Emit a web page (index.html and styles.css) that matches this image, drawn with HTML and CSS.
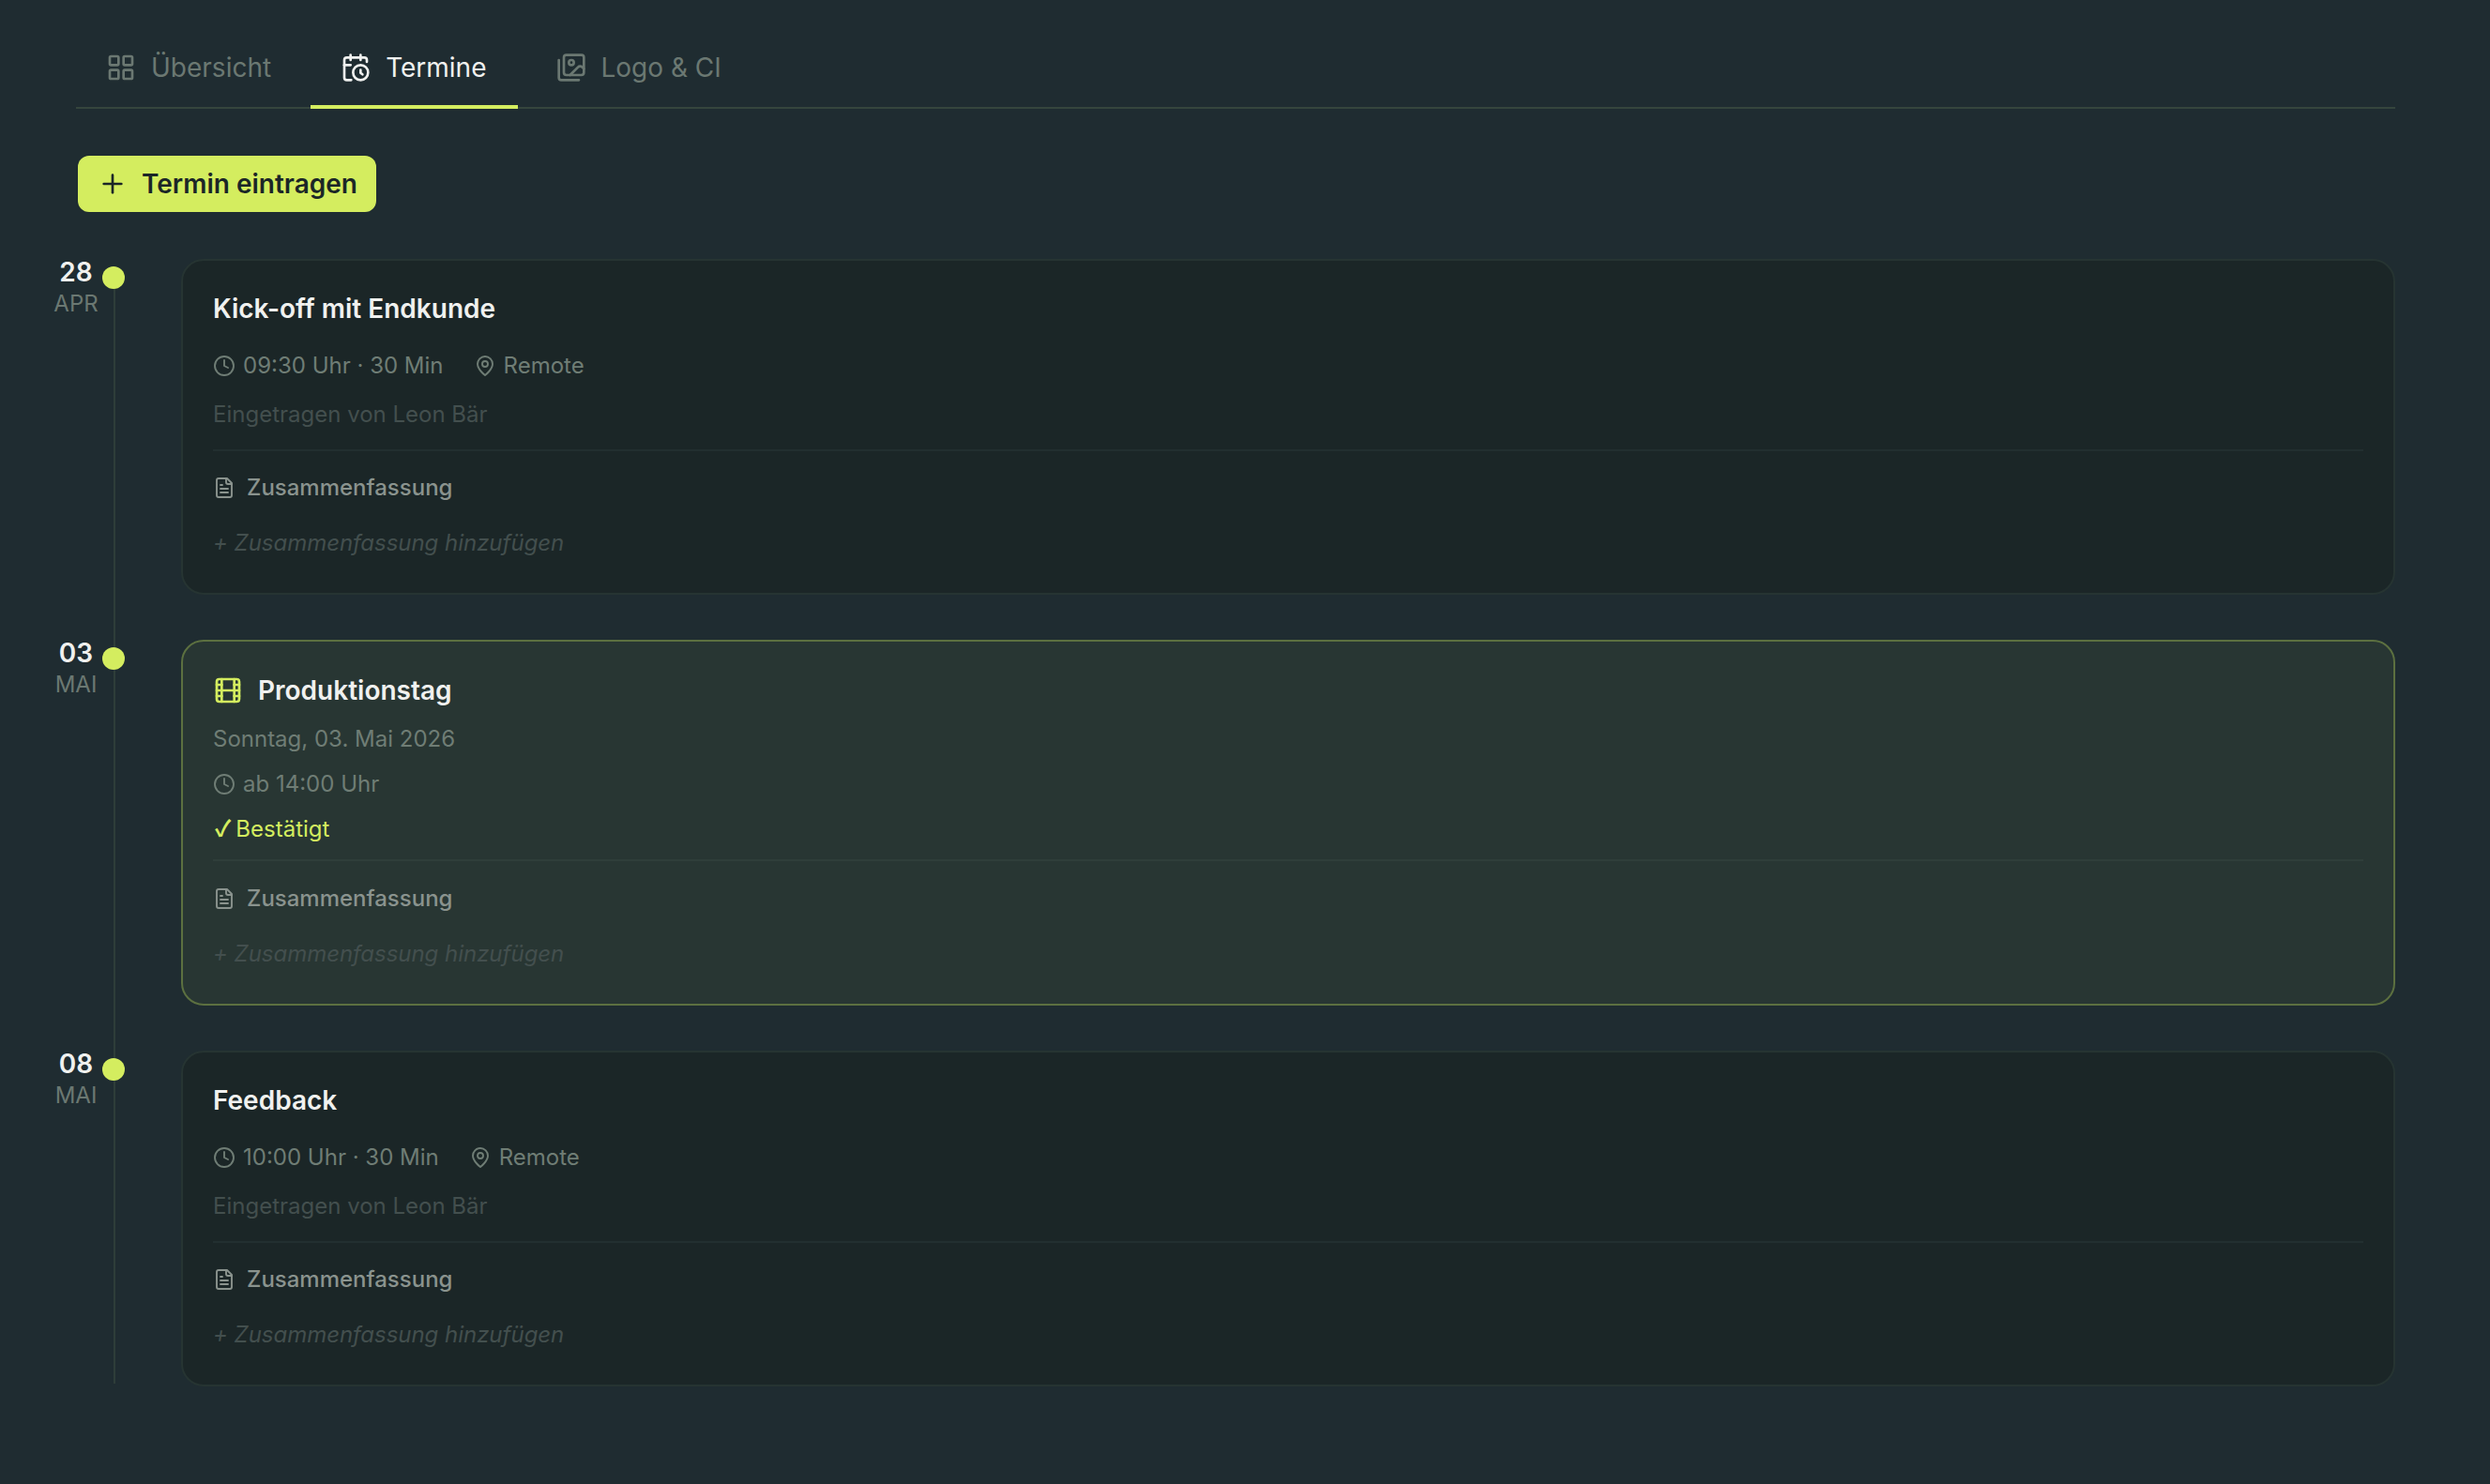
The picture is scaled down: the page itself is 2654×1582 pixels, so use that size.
FILE: index.html
```html
<!DOCTYPE html>
<html lang="de">
<head>
    <meta charset="UTF-8">
    <meta name="viewport" content="width=device-width, initial-scale=1.0">
    <title>Termine</title>
    <link rel="stylesheet" href="styles.css">
</head>
<body>
    <svg class="sprite" aria-hidden="true">
        <symbol id="i-grid" viewBox="0 0 24 24"><rect x="3" y="3" width="7" height="7" rx="1"/><rect x="14" y="3" width="7" height="7" rx="1"/><rect x="14" y="14" width="7" height="7" rx="1"/><rect x="3" y="14" width="7" height="7" rx="1"/></symbol>
        <symbol id="i-calendar" viewBox="0 0 24 24"><path d="M21 7.5V6a2 2 0 0 0-2-2H5a2 2 0 0 0-2 2v14a2 2 0 0 0 2 2h3.5"/><path d="M16 2v4"/><path d="M8 2v4"/><path d="M3 10h5"/><path d="M17.5 17.5 16 16.3V14"/><circle cx="16" cy="16" r="6"/></symbol>
        <symbol id="i-images" viewBox="0 0 24 24"><path d="M18 22H4a2 2 0 0 1-2-2V6"/><path d="m22 13-1.296-1.296a2.41 2.41 0 0 0-3.408 0L11 18"/><circle cx="12" cy="8" r="2"/><rect x="6" y="2" width="16" height="16" rx="2"/></symbol>
        <symbol id="i-plus" viewBox="0 0 24 24"><path d="M5 12h14"/><path d="M12 5v14"/></symbol>
        <symbol id="i-clock" viewBox="0 0 24 24"><circle cx="12" cy="12" r="10"/><polyline points="12 6 12 12 16 14"/></symbol>
        <symbol id="i-pin" viewBox="0 0 24 24"><path d="M20 10c0 6-8 12-8 12s-8-6-8-12a8 8 0 0 1 16 0Z"/><circle cx="12" cy="10" r="3"/></symbol>
        <symbol id="i-file" viewBox="0 0 24 24"><path d="M15 2H6a2 2 0 0 0-2 2v16a2 2 0 0 0 2 2h12a2 2 0 0 0 2-2V7Z"/><path d="M14 2v4a2 2 0 0 0 2 2h4"/><path d="M10 9H8"/><path d="M16 13H8"/><path d="M16 17H8"/></symbol>
        <symbol id="i-film" viewBox="0 0 24 24"><rect x="3" y="3" width="18" height="18" rx="2"/><path d="M7 3v18"/><path d="M3 7.5h4"/><path d="M3 12h18"/><path d="M3 16.5h4"/><path d="M17 3v18"/><path d="M17 7.5h4"/><path d="M17 16.5h4"/></symbol>
    </svg>

    <nav class="tabs">
        <a class="tab"><svg class="icon-lg"><use href="#i-grid"/></svg>Übersicht</a>
        <a class="tab active"><svg class="icon-lg"><use href="#i-calendar"/></svg>Termine</a>
        <a class="tab"><svg class="icon-lg"><use href="#i-images"/></svg>Logo &amp; CI</a>
    </nav>

    <button class="add-btn"><svg class="icon-lg"><use href="#i-plus"/></svg>Termin eintragen</button>

    <div class="timeline">
        <!-- Kick-off -->
        <div class="entry">
            <div class="date"><strong>28</strong><span>APR</span></div>
            <div class="dot"></div>
            <div class="card">
                <h2 class="title">Kick-off mit Endkunde</h2>
                <div class="meta">
                    <span class="meta-item"><svg class="icon"><use href="#i-clock"/></svg>09:30 Uhr · 30 Min</span>
                    <span class="meta-item"><svg class="icon"><use href="#i-pin"/></svg>Remote</span>
                </div>
                <div class="author">Eingetragen von Leon Bär</div>
                <div class="summary">
                    <div class="summary-head"><svg class="icon"><use href="#i-file"/></svg>Zusammenfassung</div>
                    <div class="summary-add">+ Zusammenfassung hinzufügen</div>
                </div>
            </div>
        </div>

        <!-- Produktionstag -->
        <div class="entry">
            <div class="date"><strong>03</strong><span>MAI</span></div>
            <div class="dot"></div>
            <div class="card production">
                <h2 class="title"><svg class="icon-lg"><use href="#i-film"/></svg>Produktionstag</h2>
                <div class="line">Sonntag, 03. Mai 2026</div>
                <div class="line meta-item"><svg class="icon"><use href="#i-clock"/></svg>ab 14:00 Uhr</div>
                <div class="line confirmed"><span class="check">✓</span>Bestätigt</div>
                <div class="summary">
                    <div class="summary-head"><svg class="icon"><use href="#i-file"/></svg>Zusammenfassung</div>
                    <div class="summary-add">+ Zusammenfassung hinzufügen</div>
                </div>
            </div>
        </div>

        <!-- Feedback -->
        <div class="entry">
            <div class="date"><strong>08</strong><span>MAI</span></div>
            <div class="dot"></div>
            <div class="card">
                <h2 class="title">Feedback</h2>
                <div class="meta">
                    <span class="meta-item"><svg class="icon"><use href="#i-clock"/></svg>10:00 Uhr · 30 Min</span>
                    <span class="meta-item"><svg class="icon"><use href="#i-pin"/></svg>Remote</span>
                </div>
                <div class="author">Eingetragen von Leon Bär</div>
                <div class="summary">
                    <div class="summary-head"><svg class="icon"><use href="#i-file"/></svg>Zusammenfassung</div>
                    <div class="summary-add">+ Zusammenfassung hinzufügen</div>
                </div>
            </div>
        </div>
    </div>
</body>
</html>
```

FILE: styles.css
```css
* {
    box-sizing: border-box;
}
body {
    margin: 0;
    min-height: 100vh;
    padding: 28px 101px 0 56px;
    overflow: hidden;
    background: #1f2c31;
    color: #f0f1ef;
    font-family: Inter, "Noto Sans", sans-serif;
}
.sprite {
    display: none;
}
.icon,
.icon-lg {
    fill: none;
    stroke: currentColor;
    stroke-linecap: round;
    stroke-linejoin: round;
    flex: none;
}
.icon {
    width: 24px;
    height: 24px;
    stroke-width: 1.9;
}
.icon-lg {
    width: 32px;
    height: 32px;
    stroke-width: 2;
}
.tabs {
    display: flex;
    gap: 9px;
    margin-left: 25px;
    height: 88px;
    border-bottom: 2px solid #35453d;
}
.tab {
    display: flex;
    align-items: center;
    gap: 16px;
    height: 88px;
    padding: 3px 33px 0 32px;
    border-bottom: 4px solid transparent;
    font-size: 28px;
    color: #6b7872;
}
.tab.active {
    color: #f0f1ef;
    border-bottom-color: #d4ed5f;
}
.add-btn {
    display: flex;
    align-items: center;
    gap: 15px;
    height: 60px;
    margin: 50px 0 50px 27px;
    padding: 0 20px 0 21px;
    border: none;
    border-radius: 12px;
    background: #d4ed5f;
    color: #1b2627;
    font-family: inherit;
    font-size: 28px;
    font-weight: 600;
}
.timeline {
    position: relative;
    display: flex;
    flex-direction: column;
    gap: 48px;
}
.timeline::before {
    content: "";
    position: absolute;
    left: 65px;
    top: 20px;
    bottom: 3px;
    width: 2px;
    background: #2e3d39;
}
.entry {
    display: flex;
    align-items: flex-start;
}
.date {
    display: flex;
    flex-direction: column;
    align-items: center;
    width: 50px;
    margin-top: -3px;
}
.date strong {
    font-size: 28px;
    line-height: 34px;
    font-weight: 600;
}
.date span {
    margin-top: 2px;
    font-size: 24px;
    line-height: 30px;
    color: #6b7872;
}
.dot {
    position: relative;
    width: 24px;
    height: 24px;
    margin: 8px 60px 0 3px;
    border-radius: 50%;
    background: #d4ed5f;
    flex: none;
}
.card {
    flex: 1;
    padding: 32px 32px 36px;
    border: 2px solid #263432;
    border-radius: 24px;
    background: #1b2627;
}
.card.production {
    padding-bottom: 36px;
    border-color: #5c7040;
    background: #283633;
}
.title {
    display: flex;
    align-items: center;
    gap: 16px;
    margin: 0;
    font-size: 28px;
    line-height: 38px;
    font-weight: 600;
}
.production .title {
    line-height: 40px;
    margin-bottom: 15px;
}
.production .title .icon-lg {
    color: #d4ed5f;
}
.meta {
    display: flex;
    gap: 32px;
    margin-top: 25px;
}
.meta-item {
    display: flex;
    align-items: center;
    gap: 8px;
    font-size: 24px;
    line-height: 34px;
    color: #6f7d75;
}
.author {
    margin-top: 18px;
    font-size: 24px;
    line-height: 34px;
    color: #434f4e;
}
.line {
    margin-top: 14px;
    font-size: 24px;
    line-height: 34px;
    color: #6f7d75;
}
.production .title + .line {
    margin-top: 0;
}
.confirmed {
    height: 34px;
    color: #d4ed5f;
}
.check {
    margin: 0 5px 0 2px;
    font-family: "Noto Sans CJK JP", "DejaVu Sans", sans-serif;
    font-weight: 700;
    line-height: 1;
}
.summary {
    margin-top: 20px;
    padding-top: 22px;
    border-top: 2px solid #222f30;
}
.production .summary {
    margin-top: 15px;
    padding-top: 23px;
    border-top-color: #2f3e3a;
}
.summary-head {
    display: flex;
    align-items: center;
    gap: 12px;
    font-size: 24px;
    font-weight: 500;
    line-height: 34px;
    color: #8a938e;
}
.summary-add {
    margin-top: 25px;
    font-size: 24px;
    line-height: 34px;
    letter-spacing: -0.03px;
    font-style: italic;
    color: #434f4e;
}
```
